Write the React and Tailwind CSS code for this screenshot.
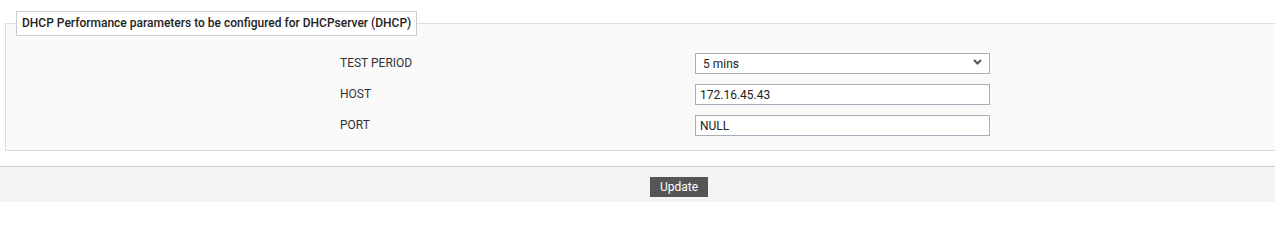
import React from "react";

function Row({ label, children }) {
  return (
    <div className="flex items-center h-[21px]">
      <div className="w-[355px] text-[12px] text-[#333]">{label}</div>
      <div className="w-[295px]">{children}</div>
    </div>
  );
}

export default function App() {
  return (
    <div className="w-full bg-white font-['Roboto',sans-serif]">
      <div className="pt-[11px] pb-[15px]">
        <fieldset className="ml-[5px] border border-r-0 border-[#dddddd] bg-[#fafafa] pb-[15px]">
          <legend className="ml-[10px] border border-[#cccccc] bg-white px-[5px] py-[4px] text-[12px] leading-[15px] font-medium text-[#222]">
            DHCP Performance parameters to be configured for DHCPserver (DHCP)
          </legend>
          <div className="ml-[334px] pt-[16px] flex flex-col gap-[10px]">
            <Row label="TEST PERIOD">
              <div className="relative">
                <select
                  defaultValue="5"
                  className="w-full h-[21px] appearance-none border border-[#a9acbb] bg-white pl-[7px] text-[12px] text-[#222] outline-none"
                >
                  <option value="5">5 mins</option>
                  <option value="10">10 mins</option>
                  <option value="15">15 mins</option>
                </select>
                <svg
                  className="pointer-events-none absolute right-[8px] top-[8px]"
                  width="9"
                  height="6"
                  viewBox="0 0 9 6"
                >
                  <path d="M1 1 L4.5 4.5 L8 1" fill="none" stroke="#555" strokeWidth="2" />
                </svg>
              </div>
            </Row>
            <Row label="HOST">
              <input
                defaultValue="172.16.45.43"
                className="w-full h-[21px] border border-[#a9acbb] bg-white px-[4px] text-[12px] text-[#222] outline-none"
              />
            </Row>
            <Row label="PORT">
              <input
                defaultValue="NULL"
                className="w-full h-[21px] border border-[#a9acbb] bg-white px-[4px] text-[12px] text-[#222] outline-none"
              />
            </Row>
          </div>
        </fieldset>
      </div>
      <div className="border-t border-[#cccccc] bg-[#f4f4f4] pt-[10px] pb-[5px] flex justify-center">
        <button className="ml-[83px] h-[20px] w-[58px] bg-[#555555] text-white text-[12px] leading-[20px]">
          Update
        </button>
      </div>
    </div>
  );
}
